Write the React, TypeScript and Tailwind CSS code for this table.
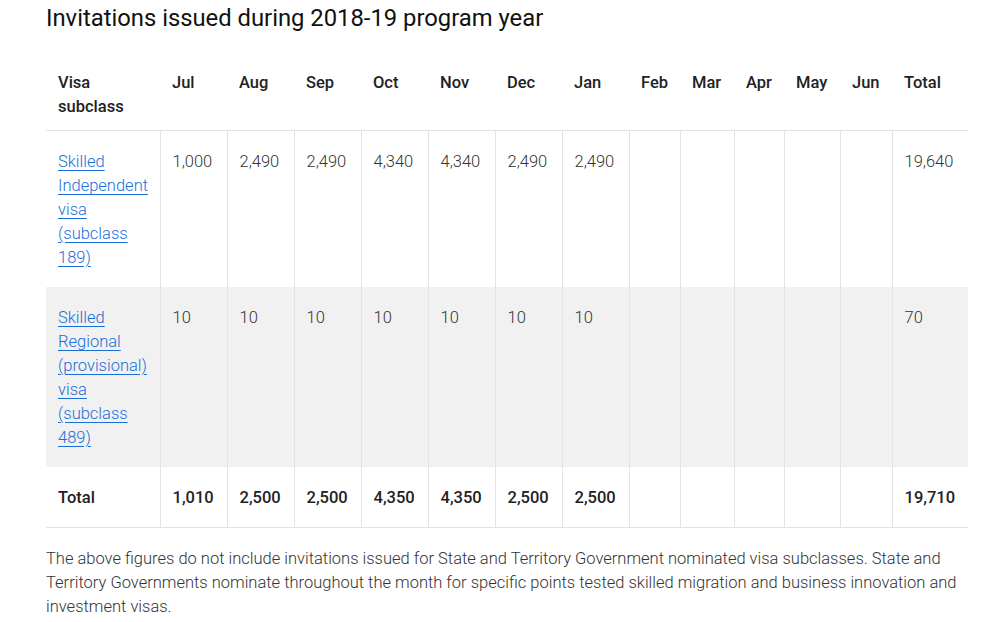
import React from "react";

const months = ["Jul", "Aug", "Sep", "Oct", "Nov", "Dec", "Jan", "Feb", "Mar", "Apr", "May", "Jun"];
const widths = ["w-[114px]", "w-[67px]", "w-[67px]", "w-[67px]", "w-[67px]", "w-[67px]", "w-[67px]", "w-[67px]", "w-[51px]", "w-[54px]", "w-[50px]", "w-[56px]", "w-[52px]", "w-[76px]"];

const rows = [
  {
    label: ["Skilled", "Independent", "visa", "(subclass", "189)"],
    values: ["1,000", "2,490", "2,490", "4,340", "4,340", "2,490", "2,490", "", "", "", "", ""],
    total: "19,640",
    bg: "bg-white",
  },
  {
    label: ["Skilled", "Regional", "(provisional)", "visa", "(subclass", "489)"],
    values: ["10", "10", "10", "10", "10", "10", "10", "", "", "", "", ""],
    total: "70",
    bg: "bg-[#f1f1f1]",
  },
];

const totals = ["1,010", "2,500", "2,500", "4,350", "4,350", "2,500", "2,500", "", "", "", "", ""];

export default function App() {
  return (
    <div className="w-[1000px] h-[622px] bg-white pl-[46px] text-[#333]" style={{ fontFamily: "Roboto, 'Liberation Sans', sans-serif" }}>
      <h2 className="text-[23.8px] leading-[32px] font-normal text-[#111] pt-[2px]">Invitations issued during 2018-19 program year</h2>
      <table className="mt-[24px] w-[922px] border-collapse table-fixed text-[16.5px] leading-[24px]">
        <thead>
          <tr>
            <th className={`${widths[0]} px-3 pt-[13px] pb-[11px] text-left align-top font-medium text-[#222]`}>Visa subclass</th>
            {months.map((m, i) => (
              <th key={m} className={`${widths[i + 1]} px-3 pt-[13px] pb-[11px] text-left align-top font-medium text-[#222]`}>{m}</th>
            ))}
            <th className={`${widths[13]} px-3 pt-[13px] pb-[11px] text-left align-top font-medium text-[#222]`}>Total</th>
          </tr>
        </thead>
        <tbody>
          {rows.map((r, ri) => (
            <tr key={ri} className={`${r.bg} ${ri === 0 ? "border-t border-[#e3e3e3]" : ""}`}>
              <td className="px-3 pt-[19px] pb-[17px] align-top border-r border-[#e3e3e3]">
                <a href="#" className="text-[#1a6fd6] font-light underline decoration-[#1a6fd6] underline-offset-[3px]">
                  {r.label.join(" ")}
                </a>
              </td>
              {r.values.map((v, i) => (
                <td key={i} className="px-3 pt-[19px] pb-[17px] align-top font-light border-r border-[#e3e3e3]">{v}</td>
              ))}
              <td className="px-3 pt-[19px] pb-[17px] align-top font-light">{r.total}</td>
            </tr>
          ))}
          <tr className="border-b border-[#e3e3e3]">
            <td className="px-3 pt-[19px] pb-[17px] align-top font-medium text-[#222] border-r border-[#e3e3e3]">Total</td>
            {totals.map((v, i) => (
              <td key={i} className="px-3 pt-[19px] pb-[17px] align-top font-medium text-[#222] border-r border-[#e3e3e3]">{v}</td>
            ))}
            <td className="px-3 pt-[19px] pb-[17px] align-top font-medium text-[#222]">19,710</td>
          </tr>
        </tbody>
      </table>
      <p className="mt-[19px] w-[922px] text-[16.5px] leading-[24px] font-light text-[#333]">
        The above figures do not include invitations issued for State and Territory Government nominated visa subclasses. State and Territory Governments nominate throughout the month for specific points tested skilled migration and business innovation and investment visas.
      </p>
    </div>
  );
}
